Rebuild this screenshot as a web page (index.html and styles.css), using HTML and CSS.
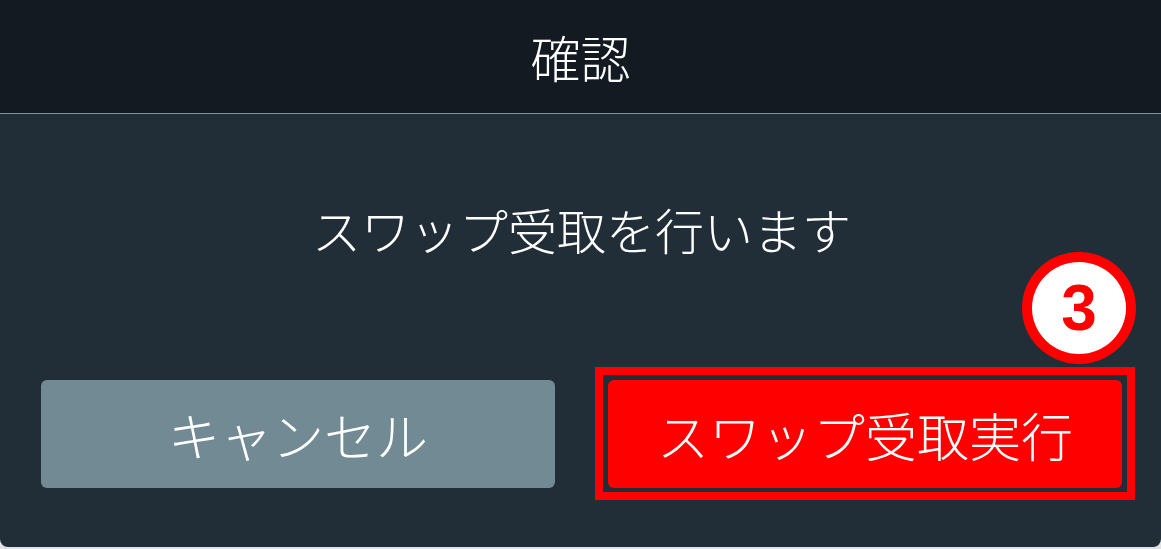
FILE: index.html
```html
<!DOCTYPE html>
<html lang="ja">
<head>
    <meta charset="UTF-8">
    <meta name="viewport" content="width=device-width, initial-scale=1.0">
    <title>確認</title>
    <link rel="stylesheet" href="styles.css">
</head>
<body>
    <div class="dialog">
        <div class="dialog-header">確認</div>
        <div class="dialog-body">
            <p class="message">スワップ受取を行います</p>
            <div class="actions">
                <button class="btn btn-cancel">キャンセル</button>
                <div class="marked">
                    <button class="btn btn-submit">スワップ受取実行</button>
                    <span class="step-badge">3</span>
                </div>
            </div>
        </div>
    </div>
</body>
</html>
```
FILE: styles.css
```css
body {
    margin: 0;
    padding: 0;
    background: #dfe3e5;
    font-family: 'Noto Sans CJK JP', 'Noto Sans', sans-serif;
    font-weight: 300;
    height: 549px;
    overflow: hidden;
}

.dialog {
    width: 1161px;
    height: 547px;
    background-color: #212e38;
    border-radius: 0 0 8px 8px;
    display: flex;
    flex-direction: column;
    overflow: hidden;
}

.dialog-header {
    height: 114px;
    background-color: #131a22;
    border-bottom: 1px solid #7c949c;
    color: #fff;
    font-size: 50px;
    display: flex;
    align-items: center;
    justify-content: center;
    box-sizing: border-box;
    padding-bottom: 2px;
}

.dialog-body {
    flex: 1;
    display: flex;
    flex-direction: column;
    padding: 0 39px 0 41px;
}

.message {
    margin: 0;
    height: 229px;
    padding-top: 79px;
    box-sizing: border-box;
    text-align: center;
    color: #fff;
    font-size: 49px;
    line-height: 72px;
}

.actions {
    display: flex;
    gap: 40px;
    margin-top: 37px;
}

.btn {
    flex-shrink: 0;
    width: 514px;
    height: 108px;
    border: none;
    border-radius: 6px;
    color: #fff;
    font-family: inherit;
    font-weight: inherit;
    font-size: 52px;
    padding: 0;
    display: flex;
    align-items: center;
    justify-content: center;
}

.btn-cancel {
    background-color: #728a93;
}

.btn-submit {
    background-color: #ff0000;
}

/* 注釈の赤枠と番号 */
.marked {
    flex-shrink: 0;
    position: relative;
    border: 8px solid #ff0000;
    padding: 5px 5px 4px;
    margin: -13px -13px -12px 0;
}

.step-badge {
    position: absolute;
    top: -123px;
    left: 419px;
    width: 94px;
    height: 92px;
    border: 10px solid #ff0000;
    border-radius: 50%;
    background: #fff;
    color: #ff0000;
    font-family: 'Liberation Sans', Arial, sans-serif;
    font-weight: bold;
    font-size: 64px;
    display: flex;
    align-items: center;
    justify-content: center;
}
```
